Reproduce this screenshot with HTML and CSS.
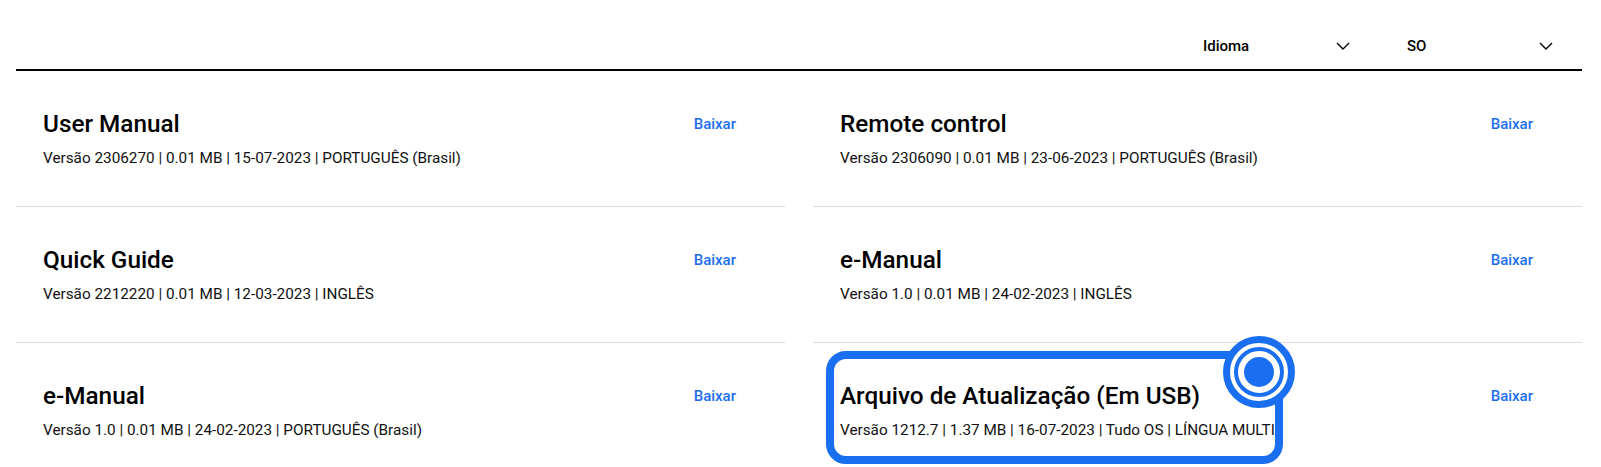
FILE: index.html
```html
<!DOCTYPE html>
<html lang="pt-BR">

<head>
    <meta charset="UTF-8">
    <meta name="viewport" content="width=device-width, initial-scale=1.0">
    <title>Manuais e downloads</title>
    <link rel="stylesheet" href="styles.css">
</head>

<body>
    <!-- Filtros -->
    <div class="filters">
        <div class="select select-lang">
            <span>Idioma</span>
            <svg class="chevron" width="14" height="8" viewBox="0 0 14 8"><path d="M1 1l6 6 6-6" fill="none" stroke="#000" stroke-width="1.4"/></svg>
        </div>
        <div class="select select-os">
            <span>SO</span>
            <svg class="chevron" width="14" height="8" viewBox="0 0 14 8"><path d="M1 1l6 6 6-6" fill="none" stroke="#000" stroke-width="1.4"/></svg>
        </div>
    </div>

    <!-- Lista de downloads -->
    <div class="download-list">
        <div class="download-item">
            <div class="download-info">
                <h3 class="download-title">User Manual</h3>
                <p class="download-meta">Versão 2306270 | 0.01 MB | 15-07-2023 | PORTUGUÊS (Brasil)</p>
            </div>
            <a class="download-link" href="#">Baixar</a>
        </div>
        <div class="download-item">
            <div class="download-info">
                <h3 class="download-title">Remote control</h3>
                <p class="download-meta">Versão 2306090 | 0.01 MB | 23-06-2023 | PORTUGUÊS (Brasil)</p>
            </div>
            <a class="download-link" href="#">Baixar</a>
        </div>
        <div class="download-item">
            <div class="download-info">
                <h3 class="download-title">Quick Guide</h3>
                <p class="download-meta">Versão 2212220 | 0.01 MB | 12-03-2023 | INGLÊS</p>
            </div>
            <a class="download-link" href="#">Baixar</a>
        </div>
        <div class="download-item">
            <div class="download-info">
                <h3 class="download-title">e-Manual</h3>
                <p class="download-meta">Versão 1.0 | 0.01 MB | 24-02-2023 | INGLÊS</p>
            </div>
            <a class="download-link" href="#">Baixar</a>
        </div>
        <div class="download-item last">
            <div class="download-info">
                <h3 class="download-title">e-Manual</h3>
                <p class="download-meta">Versão 1.0 | 0.01 MB | 24-02-2023 | PORTUGUÊS (Brasil)</p>
            </div>
            <a class="download-link" href="#">Baixar</a>
        </div>
        <div class="download-item last">
            <div class="download-info">
                <h3 class="download-title">Arquivo de Atualização (Em USB)</h3>
                <p class="download-meta">Versão 1212.7 | 1.37 MB | 16-07-2023 | Tudo OS | LÍNGUA MULTI</p>
            </div>
            <a class="download-link" href="#">Baixar</a>
            <!-- Destaque -->
            <div class="highlight-box"></div>
            <svg class="highlight-dot" width="74" height="74" viewBox="0 0 74 74">
                <circle cx="37" cy="37" r="32.5" fill="#fff" stroke="#1a6ff0" stroke-width="7"/>
                <circle cx="37" cy="37" r="23" fill="none" stroke="#1a6ff0" stroke-width="4"/>
                <circle cx="37" cy="37" r="15" fill="#1a6ff0"/>
            </svg>
        </div>
    </div>
</body>

</html>
```

FILE: styles.css
```css
body {
    font-family: 'Roboto', 'Noto Sans', sans-serif;
    background-color: #fff;
    color: #000;
    margin: 0;
    padding: 0 19px 0 16px;
    overflow: hidden;
}

.filters {
    display: flex;
    justify-content: flex-end;
    gap: 57px;
    height: 71px;
    padding: 0 29px 0 0;
    border-bottom: 2px solid #000;
    box-sizing: border-box;
}

.select {
    display: flex;
    justify-content: space-between;
    align-items: center;
    height: 20px;
    margin-top: 36px;
    font-size: 15px;
    font-weight: 500;
}

.select-lang {
    width: 147px;
}

.select-os {
    width: 146px;
}

.chevron {
    display: block;
}

.download-list {
    display: grid;
    grid-template-columns: 1fr 1fr;
    column-gap: 28px;
}

.download-item {
    position: relative;
    display: flex;
    justify-content: space-between;
    align-items: flex-start;
    padding: 37px 49px 38px 27px;
    border-bottom: 1px solid #ddd;
    height: 136px;
    box-sizing: border-box;
}

.download-item.last {
    border-bottom: none;
}

.download-title {
    margin: 0;
    font-size: 24.3px;
    line-height: 32px;
    font-weight: 500;
}

.download-meta {
    margin: 7px 0 0;
    font-size: 15.3px;
    line-height: 22px;
    color: #111;
}

.download-link {
    font-size: 15px;
    line-height: 32px;
    font-weight: 500;
    color: #1d6ff0;
    text-decoration: none;
}

.highlight-box {
    position: absolute;
    left: 13px;
    top: 8px;
    width: 457px;
    height: 113px;
    border: 8px solid #1a6ff0;
    border-radius: 20px;
    box-sizing: border-box;
}

.highlight-dot {
    position: absolute;
    left: 409px;
    top: -8px;
}
```
